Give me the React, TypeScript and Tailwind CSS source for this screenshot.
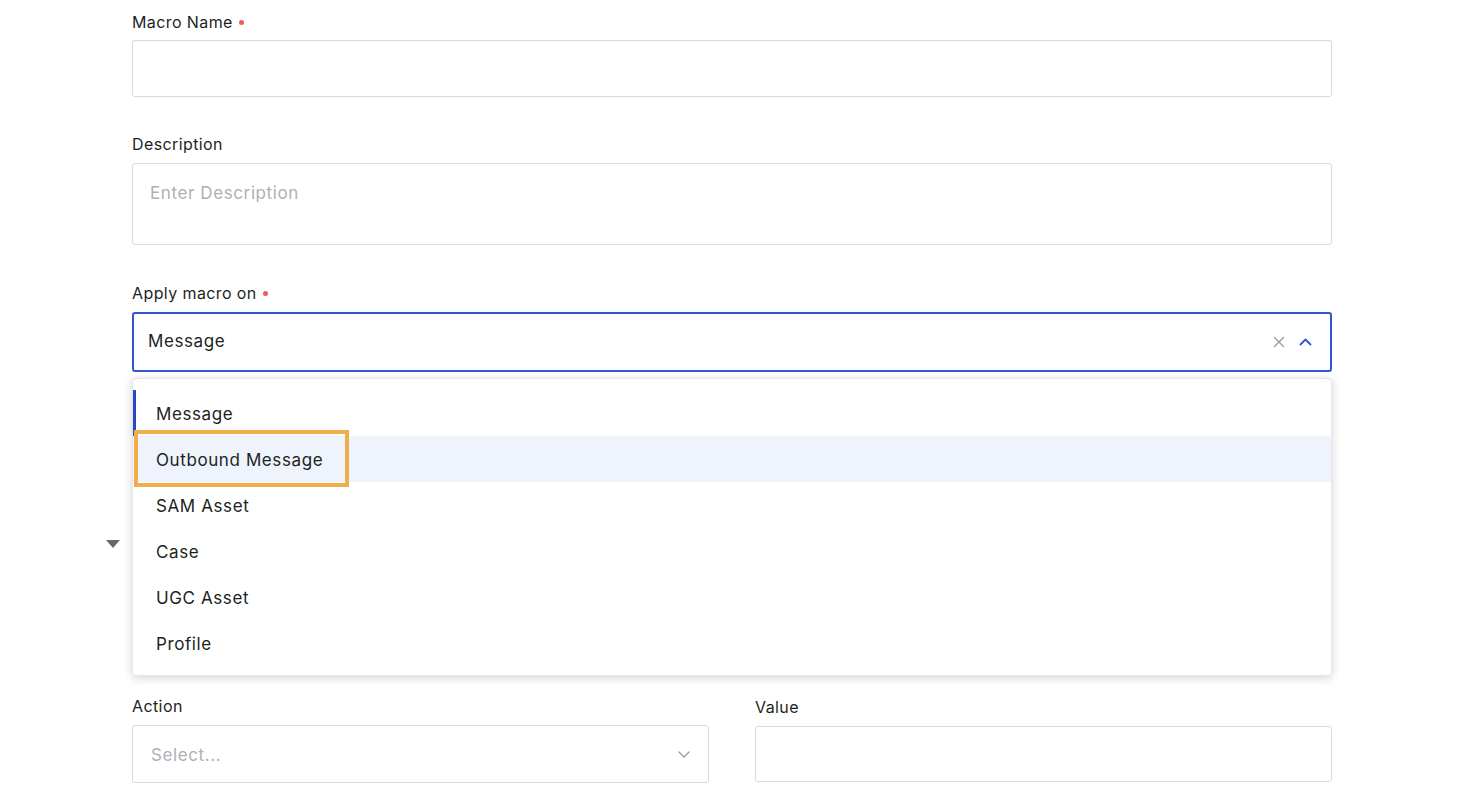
import React from 'react';

const font = { fontFamily: 'Inter, "Noto Sans", sans-serif' };

function Label({ text, required }: { text: string; required?: boolean }) {
  return (
    <div className="flex items-center h-5 text-[16px] leading-5 tracking-[0.4px] text-[#1d1f24]">
      <span>{text}</span>
      {required && <span className="ml-[6px] w-[5px] h-[5px] rounded-full bg-[#ef5b55]" />}
    </div>
  );
}

const options = ['Message', 'Outbound Message', 'SAM Asset', 'Case', 'UGC Asset', 'Profile'];

export default function App() {
  return (
    <div className="w-[1484px] h-[808px] bg-white overflow-hidden relative" style={font}>
      <div className="ml-[132px] w-[1200px] pt-[12px] relative">
        {/* Macro name */}
        <Label text="Macro Name" required />
        <div className="mt-[8px] h-[57px] rounded-[3px] border border-[#d8d9e0] bg-white" />

        {/* Description */}
        <div className="mt-[37px]">
          <Label text="Description" />
        </div>
        <div className="mt-[9px] h-[82px] rounded-[3px] border border-[#d8d9e0] px-[17px] pt-[19px] text-[17px] leading-5 tracking-[0.6px] text-[#aeb0b8]">
          Enter Description
        </div>

        {/* Apply macro on */}
        <div className="mt-[38px]">
          <Label text="Apply macro on" required />
        </div>
        <div className="mt-[9px] h-[60px] rounded-[3px] border-2 border-[#3553d6] flex items-center pl-[14px] pr-[18px]">
          <span className="flex-1 text-[17px] tracking-[0.6px] text-[#1d1f24]">Message</span>
          <svg width="12" height="12" viewBox="0 0 12 12" className="mr-[14px]">
            <path d="M1.5 1.5l9 9M10.5 1.5l-9 9" stroke="#9a9ca4" strokeWidth="1.4" strokeLinecap="round" />
          </svg>
          <svg width="13" height="8" viewBox="0 0 13 8">
            <path d="M1.5 6.5l5-5 5 5" stroke="#3553d6" strokeWidth="1.8" fill="none" strokeLinecap="round" strokeLinejoin="round" />
          </svg>
        </div>

        {/* collapsed section underneath */}
        <div className="relative h-[324px]">
          <svg width="14" height="9" viewBox="0 0 14 9" className="absolute left-[-26px] top-[168px]">
            <path d="M0 0h14L7 8z" fill="#66686e" />
          </svg>
        </div>

        {/* Action / Value */}
        <div className="flex gap-[46px]">
          <div className="w-[577px]">
            <Label text="Action" />
            <div className="mt-[9px] h-[58px] rounded-[3px] border border-[#d8d9e0] flex items-center pl-[18px] pr-[18px]">
              <span className="flex-1 text-[17px] tracking-[0.6px] text-[#aeb0b8] mt-[4px]">Select...</span>
              <svg width="12" height="7" viewBox="0 0 12 7">
                <path d="M1 1l5 5 5-5" stroke="#9a9ca4" strokeWidth="1.3" fill="none" strokeLinecap="round" />
              </svg>
            </div>
          </div>
          <div className="flex-1">
            <div className="mt-[1px]">
              <Label text="Value" />
            </div>
            <div className="mt-[9px] h-[56px] rounded-[3px] border border-[#d8d9e0]" />
          </div>
        </div>

        {/* Dropdown menu overlay */}
        <div className="absolute left-0 top-[378px] w-[1200px] h-[298px] bg-white rounded-[4px] shadow-[0_2px_10px_rgba(20,24,40,0.18)] border border-[#e6e7ec] py-[11px]">
          {options.map((o, i) => (
            <div
              key={o}
              className={`relative h-[46px] flex items-center pl-[23px] pt-[4px] text-[17px] tracking-[0.6px] text-[#1d1f24] ${i === 1 ? 'bg-[#eff3fb]' : ''}`}
            >
              {i === 0 && <span className="absolute left-0 top-0 bottom-0 w-[3px] bg-[#2a45c8]" />}
              {o}
              {i === 1 && (
                <span className="absolute left-[1px] top-[-6px] w-[215px] h-[57px] border-4 border-[#f0ae4a]" />
              )}
            </div>
          ))}
        </div>
      </div>
    </div>
  );
}
